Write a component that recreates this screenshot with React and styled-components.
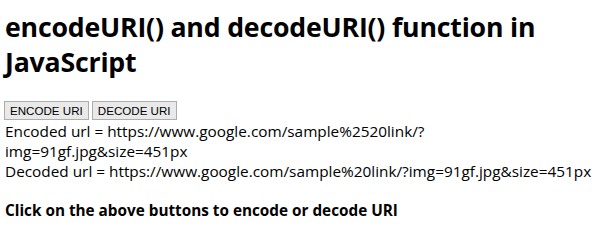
import React, { useState } from 'react'
import styled, { createGlobalStyle } from 'styled-components'

const Global = createGlobalStyle`
  body {
    margin: 0;
    background: #ffffff;
    font-family: "Open Sans", "Noto Sans", sans-serif;
    color: #000;
  }
`

const Page = styled.div`
  padding: 0 5px;
`

const Title = styled.h1`
  font-size: 26.7px;
  font-weight: 700;
  line-height: 35px;
  margin: 9px 0 22px 0;
  letter-spacing: -0.2px;
`

const ButtonRow = styled.div`
  display: flex;
  align-items: flex-start;
  gap: 3px;
  margin-left: -1px;
  margin-bottom: 1px;
`

const Btn = styled.button`
  font-family: "Liberation Sans", Arial, sans-serif;
  font-size: 11.6px;
  line-height: 15px;
  padding: 1px 5px;
  height: 19px;
  background: #e9e9e9;
  border: 1px solid #adadad;
  border-radius: 0;
  color: #000;
`

const Result = styled.div`
  font-size: 15.35px;
  line-height: 20px;
`

const Hint = styled.p`
  font-size: 15.3px;
  font-weight: 700;
  margin: 19px 0 0 0;
`

export default function App() {
  const url = 'https://www.google.com/sample%20link/?img=91gf.jpg&size=451px'
  const [enc] = useState(encodeURI(url))
  return (
    <Page>
      <Global />
      <Title>encodeURI() and decodeURI() function in JavaScript</Title>
      <ButtonRow>
        <Btn>ENCODE URI</Btn>
        <Btn>DECODE URI</Btn>
      </ButtonRow>
      <Result>Encoded url = {enc}</Result>
      <Result>Decoded url = {url}</Result>
      <Hint>Click on the above buttons to encode or decode URI</Hint>
    </Page>
  )
}
